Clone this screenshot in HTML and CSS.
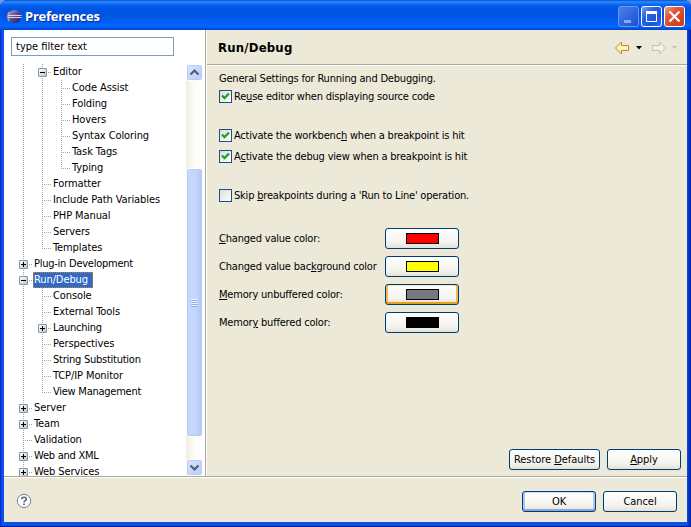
FILE: index.html
```
<!DOCTYPE html>
<html lang="en">
<head>
<meta charset="utf-8">
<title>Preferences</title>
<link rel="stylesheet" href="styles.css">
</head>
<body>
<div class="window">
  <header class="titlebar">
    <svg class="logo" width="15" height="15" viewBox="0 0 15 15"><defs><linearGradient id="orb" x1="0" y1="0" x2="1" y2="1"><stop offset="0" stop-color="#b6a5cf"/><stop offset=".5" stop-color="#5a4a94"/><stop offset="1" stop-color="#241a62"/></linearGradient></defs><circle cx="7.5" cy="7.5" r="6.6" fill="url(#orb)"/><path d="M2 3Q-.5 7.5 2 12" fill="none" stroke="#d9a08a" stroke-width="1.300"/><path d="M1 6.500H14.500M1 8.500H14.500" stroke="#d9d5ee" stroke-width="1"/></svg>
    <h1>Preferences</h1>
    <div class="controls">
      <svg class="ctl min" width="21" height="21"><path d="M5 14.500H12" stroke="#83a9f0" stroke-width="3"/></svg>
      <svg class="ctl max" width="21" height="21"><path d="M4.500 5V14.500H14.500V5" fill="none" stroke="#fff"/><path d="M4 5.500H15" stroke="#fff" stroke-width="3"/></svg>
      <svg class="ctl close" width="21" height="21"><path d="M4.500 4.500L14.500 14.500M14.500 4.500L4.500 14.500" stroke="#fff" stroke-width="2.200"/></svg>
    </div>
  </header>
  <div class="main">
    <aside class="side">
      <div class="filter">type filter text</div>
      <div class="browse">
        <ul class="tree">
          <li><i class="v"></i><i class="t"><b class="minus"></b></i><span>Editor</span></li>
          <li><i class="v"></i><i class="v"></i><i class="t"></i><span>Code Assist</span></li>
          <li><i class="v"></i><i class="v"></i><i class="t"></i><span>Folding</span></li>
          <li><i class="v"></i><i class="v"></i><i class="t"></i><span>Hovers</span></li>
          <li><i class="v"></i><i class="v"></i><i class="t"></i><span>Syntax Coloring</span></li>
          <li><i class="v"></i><i class="v"></i><i class="t"></i><span>Task Tags</span></li>
          <li><i class="v"></i><i class="v"></i><i class="t end"></i><span>Typing</span></li>
          <li><i class="v"></i><i class="t"></i><span>Formatter</span></li>
          <li><i class="v"></i><i class="t"></i><span>Include Path Variables</span></li>
          <li><i class="v"></i><i class="t"></i><span>PHP Manual</span></li>
          <li><i class="v"></i><i class="t"></i><span>Servers</span></li>
          <li><i class="v"></i><i class="t end"></i><span>Templates</span></li>
          <li><i class="t"><b class="plus"></b></i><span class="tight">Plug-in Development</span></li>
          <li><i class="t"><b class="minus"></b></i><span class="selected">Run/Debug</span></li>
          <li><i class="v"></i><i class="t"></i><span>Console</span></li>
          <li><i class="v"></i><i class="t"></i><span>External Tools</span></li>
          <li><i class="v"></i><i class="t"><b class="plus"></b></i><span class="tight">Launching</span></li>
          <li><i class="v"></i><i class="t"></i><span>Perspectives</span></li>
          <li><i class="v"></i><i class="t"></i><span class="tight">String Substitution</span></li>
          <li><i class="v"></i><i class="t"></i><span>TCP/IP Monitor</span></li>
          <li><i class="v"></i><i class="t end"></i><span class="tight">View Management</span></li>
          <li><i class="t"><b class="plus"></b></i><span>Server</span></li>
          <li><i class="t"><b class="plus"></b></i><span>Team</span></li>
          <li><i class="t"></i><span>Validation</span></li>
          <li><i class="t"><b class="plus"></b></i><span class="tight">Web and XML</span></li>
          <li><i class="t"><b class="plus"></b></i><span>Web Services</span></li>
        </ul>
        <div class="scroll">
          <div class="arrow"><svg width="15" height="15"><path d="M3.500 9.500L7.500 5.500L11.500 9.500" fill="none" stroke="#4d6185" stroke-width="2.200"/></svg></div>
          <div class="thumb"><div class="grip"></div></div>
          <div class="arrow"><svg width="15" height="15"><path d="M3.500 5.500L7.500 9.500L11.500 5.500" fill="none" stroke="#4d6185" stroke-width="2.200"/></svg></div>
        </div>
      </div>
    </aside>
    <section class="page">
      <div class="head">
        <h2>Run/Debug</h2>
        <svg width="70" height="16" viewBox="0 0 70 16">
          <path d="M1.500 8L7.500 2V5.500H14.500V10.500H7.500V14Z" fill="#fff1b8" stroke="#bd8a2c" stroke-linejoin="round"/>
          <path d="M22 6H28L25 9.500Z" fill="#000"/>
          <path d="M51.500 8L45.500 2V5.500H38.500V10.500H45.500V14Z" fill="#f3f1e8" stroke="#c2c0b8" stroke-linejoin="round"/>
          <path d="M58 6H63L60.500 9Z" fill="#c4c0b2"/>
        </svg>
      </div>
      <div class="content">
        <p class="intro">General Settings for Running and Debugging.</p>
        <div class="check"><b class="cb"><svg width="11" height="11"><path d="M2 4.500L4.500 7L9 2.500" fill="none" stroke="#21a121" stroke-width="2.300"/></svg></b><span>Re<u>u</u>se editor when displaying source code</span></div>
        <div class="check gap"><b class="cb"><svg width="11" height="11"><path d="M2 4.500L4.500 7L9 2.500" fill="none" stroke="#21a121" stroke-width="2.300"/></svg></b><span>Activate the workbenc<u>h</u> when a breakpoint is hit</span></div>
        <div class="check next"><b class="cb"><svg width="11" height="11"><path d="M2 4.500L4.500 7L9 2.500" fill="none" stroke="#21a121" stroke-width="2.300"/></svg></b><span>A<u>c</u>tivate the debug view when a breakpoint is hit</span></div>
        <div class="check gap"><b class="cb"></b><span>Skip <u>b</u>reakpoints during a 'Run to Line' operation.</span></div>
        <div class="colors">
          <span><u>C</u>hanged value color:</span><div class="btn"><i class="swatch red"></i></div>
          <span>Changed value bac<u>k</u>ground color</span><div class="btn"><i class="swatch yellow"></i></div>
          <span><u>M</u>emory unbuffered color:</span><div class="btn hot"><i class="swatch gray"></i></div>
          <span>Memor<u>y</u> buffered color:</span><div class="btn"><i class="swatch black"></i></div>
        </div>
        <div class="actions">
          <div class="btn restore"><span>Restore <u>D</u>efaults</span></div>
          <div class="btn"><span><u>A</u>pply</span></div>
        </div>
      </div>
    </section>
  </div>
  <footer class="foot">
    <svg width="16" height="16" viewBox="0 0 16 16"><circle cx="8" cy="8" r="6.700" fill="#fcfcf8" stroke="#758399"/><path d="M5.700 6.300Q5.700 4.300 8 4.300Q10.300 4.300 10.300 6.200Q10.300 7.300 9 7.900Q8 8.400 8 9.600M8 10.600V12.200" fill="none" stroke="#536582" stroke-width="1.500"/></svg>
    <div class="btn default"><span>OK</span></div>
    <div class="btn"><span>Cancel</span></div>
  </footer>
</div>
</body>
</html>
```
FILE: styles.css
```
* { box-sizing: border-box; }
body {
  margin: 0;
  background: #6f9be8;
  font: 11px/16px "DejaVu Sans Condensed", "DejaVu Sans", sans-serif;
  font-stretch: condensed;
  color: #000;
}
h1, h2, p, ul { margin: 0; padding: 0; }
u { text-decoration: underline; text-underline-offset: 1px; text-decoration-thickness: 1px; }
.window {
  width: 691px;
  height: 527px;
  display: flex;
  flex-direction: column;
  padding: 0 4px 4px;
  background: linear-gradient(90deg, #0019cf, #0c55ea 2px, #0c50e4 4px, #0c50e4 687px, #0042dc 688px, #0019a0);
  border-radius: 7px 7px 0 0;
  border-bottom: 1px solid #001a9e;
  overflow: hidden;
}
.titlebar {
  height: 30px;
  flex: none;
  margin: 0 -4px;
  padding: 2px 6px 0 7px;
  display: flex;
  align-items: center;
  background: linear-gradient(#0a50c8, #2f8cff 2px, #0a6cf8 4px, #0055e5 8px, #0053e1 15px, #0060f6 22px, #0066ff 26px, #0050dd 29px, #0040c0);
}
.logo { flex: none; }
.titlebar h1 {
  margin-left: 3px;
  font: bold 13px/16px "Open Sans", "Noto Sans", sans-serif;
  letter-spacing: -.25px;
  color: #fff;
  text-shadow: 1px 1px 0 #0a2a86;
}
.controls { margin-left: auto; display: flex; gap: 2px; }
.ctl {
  border: 1px solid #fff;
  border-radius: 3px;
  background: linear-gradient(135deg, #6f9bf6, #2a62e4 35%, #1f55dc 70%, #2e6df0);
}
.min { border-color: #6c98ee; background: linear-gradient(135deg, #4c7ee8, #1a4fd2); }
.close { background: linear-gradient(135deg, #f0a08a, #e2573a 35%, #d2401c 80%); }
.main { flex: 1; display: flex; min-height: 0; background: #ece9d8; }
.side {
  width: 202px;
  display: flex;
  flex-direction: column;
  background: #fff;
  border-right: 1px solid #aca899;
}
.filter {
  margin: 7px 31px 8px 7px;
  height: 19px;
  padding-left: 4px;
  border: 1px solid #7f9db9;
  line-height: 18px;
}
.browse { flex: 1; display: flex; min-height: 0; overflow: hidden; }
.tree { flex: 1; list-style: none; padding-left: 10px; overflow: hidden; }
.tree li { display: flex; height: 16px; white-space: nowrap; }
.tree span { padding: 0 2px 0 1px; letter-spacing: -.1px; }
.tree .tight { letter-spacing: -.25px; }
.tree .selected {
  margin-right: auto;
  padding-right: 5px;
  color: #fff;
  background: #316ac5;
  outline: 1px dotted #c5833a;
  outline-offset: -1px;
}
.tree i {
  width: 19px;
  flex: none;
  padding: 4px 0 0 5px;
  background: repeating-linear-gradient(#a5a5a5 0 1px, transparent 1px 2px) 9px 0 / 1px 16px no-repeat;
}
.tree i.t {
  background:
    repeating-linear-gradient(#a5a5a5 0 1px, transparent 1px 2px) 9px 0 / 1px 16px no-repeat,
    repeating-linear-gradient(90deg, #a5a5a5 0 1px, transparent 1px 2px) 9px 8px / 9px 1px no-repeat;
}
.tree i.end { background-size: 1px 9px, 9px 1px; }
.tree b {
  display: block;
  width: 9px;
  height: 9px;
  border: 1px solid #7898b5;
  border-radius: 1px;
  background:
    linear-gradient(#000, #000) 1px 3px / 5px 1px no-repeat,
    linear-gradient(135deg, #fff, #c9c3b5);
}
.tree .plus {
  background:
    linear-gradient(#000, #000) 1px 3px / 5px 1px no-repeat,
    linear-gradient(#000, #000) 3px 1px / 1px 5px no-repeat,
    linear-gradient(135deg, #fff, #c9c3b5);
}
.scroll {
  width: 17px;
  margin-right: 2px;
  display: flex;
  flex-direction: column;
  background: linear-gradient(90deg, #eeede5, #fdfcf8 50%, #fefefb);
}
.arrow, .thumb {
  border: 1px solid #fff;
  border-radius: 3px;
  background: linear-gradient(135deg, #dce6fe, #b9cbf7);
  box-shadow: inset 0 0 0 1px #b8caf4;
}
.arrow { height: 17px; }
.arrow svg { display: block; }
.thumb {
  height: 269px;
  margin: 87px 0 22px;
  background: linear-gradient(90deg, #c9d8fd, #c4d4fc 60%, #b2c6f6);
  display: flex;
  align-items: center;
  justify-content: center;
}
.grip { width: 7px; height: 8px; background: repeating-linear-gradient(#eef4fe 0 1px, #8cb0f8 1px 2px); }
.page { flex: 1; display: flex; flex-direction: column; border-left: 1px solid #fff; }
.head {
  height: 36px;
  flex: none;
  display: flex;
  align-items: center;
  justify-content: space-between;
  padding: 1px 3px 1px 11px;
  border-bottom: 1px solid #fff;
  box-shadow: inset 0 -1px #aca899;
}
.head h2 { font-size: 13px; line-height: 18px; letter-spacing: .2px; padding-top: 1px; }
.content { flex: 1; display: flex; flex-direction: column; padding: 4px 0 6px 12px; letter-spacing: -.2px; }
.intro { position: relative; top: 1px; }
.check { height: 17px; margin-top: 2px; display: flex; align-items: center; white-space: nowrap; }
.check.gap { margin-top: 22px; }
.check.next { margin-top: 4px; }
.check span { padding: 1px 0 0 2px; }
.cb {
  width: 13px;
  height: 13px;
  border: 1px solid #1c5180;
  background: linear-gradient(135deg, #dcdcd7, #fff);
}
.cb svg { display: block; }
.colors {
  display: grid;
  grid-template-columns: 166px 74px;
  grid-auto-rows: 22px;
  row-gap: 6px;
  align-items: center;
  margin-top: 23px;
  white-space: nowrap;
}
.colors > span { padding-top: 2px; }
.btn {
  width: 74px;
  height: 21px;
  display: flex;
  align-items: center;
  justify-content: center;
  letter-spacing: -.05px;
  border: 1px solid #003c74;
  border-radius: 3px;
  background: linear-gradient(#fff, #f4f3ee 70%, #e4e0d4);
}
.btn span { padding-top: 1px; }
.hot { box-shadow: inset 0 -2px #e5a01e, inset 2px 0 #f4b94c, inset -2px 0 #f4b94c, inset 0 1px #fde3ad; }
.default { box-shadow: inset 0 -2px #8aa6e4, inset 2px 0 #b0c7f4, inset -2px 0 #b0c7f4, inset 0 1px #cee0ff; }
.swatch { width: 33px; height: 11px; border: 1px solid #000; }
.red { background: #f00; }
.yellow { background: #ff0; }
.gray { background: #787880; }
.black { background: #000; }
.actions { margin-top: auto; padding-right: 6px; display: flex; justify-content: flex-end; gap: 7px; }
.restore { width: 91px; }
.foot {
  height: 46px;
  flex: none;
  display: flex;
  align-items: center;
  gap: 7px;
  padding: 3px 10px 0 12px;
  background: #ece9d8;
  border-top: 1px solid #aca899;
  box-shadow: inset 0 1px #fff;
}
.foot .default { margin-left: auto; }
```
